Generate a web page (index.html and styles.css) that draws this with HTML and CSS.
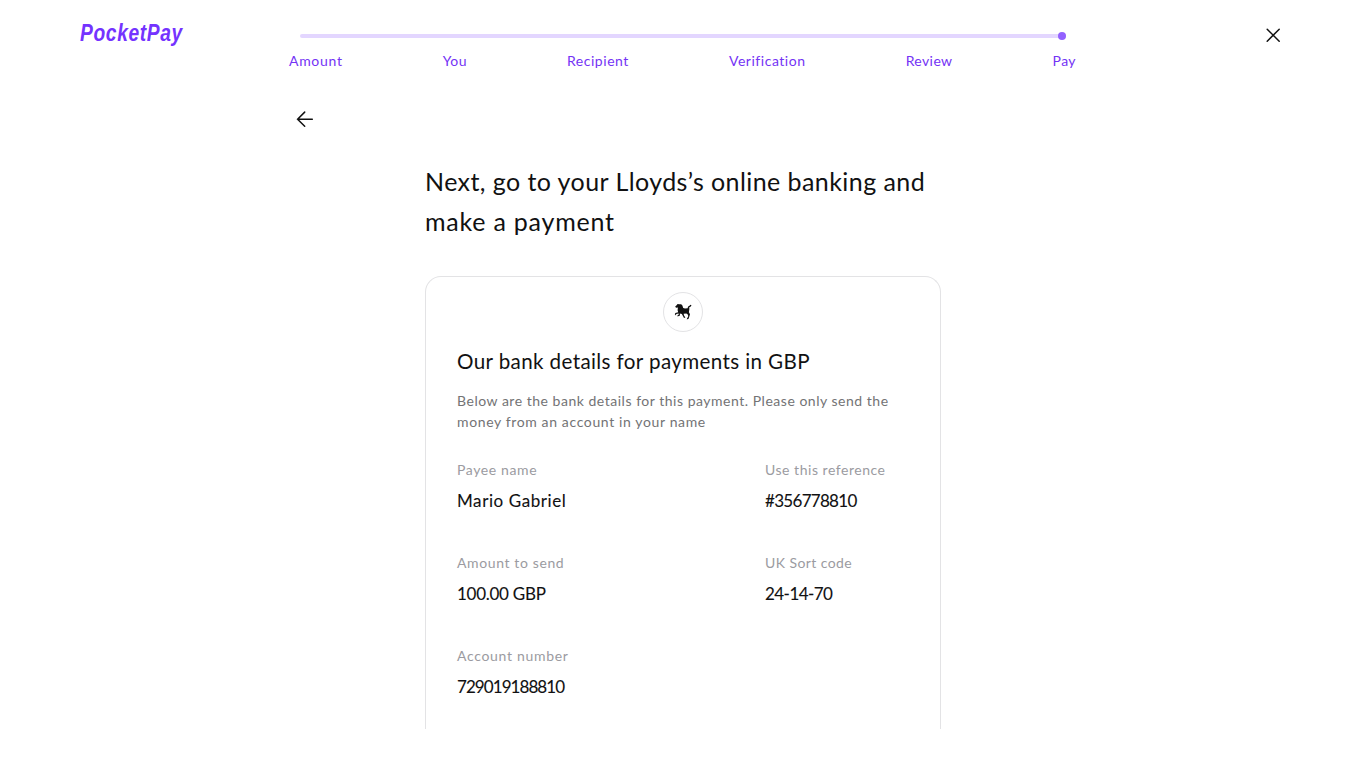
FILE: index.html
```
<!DOCTYPE html>
<html lang="en">
<head>
<meta charset="utf-8">
<title>PocketPay</title>
<link rel="stylesheet" href="styles.css">
</head>
<body>
<header class="header">
  <div class="logo"><span class="logo-text">PocketPay</span></div>
  <nav class="progress">
    <div class="track"><span class="dot"></span></div>
    <ol class="steps">
      <li class="wide">Amount</li><li class="snug">You</li><li>Recipient</li><li>Verification</li><li class="snug">Review</li><li class="snug">Pay</li>
    </ol>
  </nav>
  <button class="close" aria-label="Close"><svg width="16" height="16" viewBox="0 0 16 16"><path d="M2.2 2.2 14.2 14.2M14.2 2.2 2.2 14.2"/></svg></button>
</header>
<main class="main">
  <button class="back" aria-label="Back"><svg width="18" height="18" viewBox="0 0 18 18"><path d="M8.7 2.1 1.6 9.2 8.7 16.3M1.6 9.2H16.3"/></svg></button>
  <h1 class="heading">Next, go to your Lloyds’s online banking and<br><span class="heading-end">make a payment</span></h1>
  <section class="card">
    <div class="bank"><svg width="18" height="18" viewBox="0 0 18 18"><path d="M1.2 3.6 2.6 2.2 3.6 1 5.2 1.3 7.2 1.2 8.4 2.6 9.2 5 11 5.6 13.6 5.2 14.1 3.6 15.2 3 16.4 1.7 17.5 2.2 16.8 3.6 15.3 4.2 15.3 6.6 14.9 9.3 16 11.2 15.4 13.2 14.6 15.8 12.8 16.4 13 15.6 14.2 13.4 14 11.7 12.4 10.4 9.6 10.8 10.2 12.8 11.4 14.6 10 15 8.8 12.8 7.8 11 5.8 10.6 6 12.4 3.6 13.4 3.4 12.6 4.8 11.6 4.6 10.6 2.2 11 2 12.4.8 11.2 1.4 10 4.2 9.2 3.6 7.2 3.9 4.4 2 4.8Z"/></svg></div>
    <h2 class="title">Our bank details for payments in GBP</h2>
    <p class="intro">Below are the bank details for this payment. Please only send the<br><span class="intro-end">money from an account in your name</span></p>
    <dl class="details">
      <div><dt>Payee name</dt><dd class="name">Mario Gabriel</dd></div>
      <div><dt class="reference">Use this reference</dt><dd class="number">#356778810</dd></div>
      <div><dt>Amount to send</dt><dd class="amount">100.00 GBP</dd></div>
      <div><dt class="sort-label">UK Sort code</dt><dd class="sort">24-14-70</dd></div>
      <div><dt class="account-label">Account number</dt><dd class="account">729019188810</dd></div>
    </dl>
  </section>
</main>
</body>
</html>
```
FILE: styles.css
```
* { box-sizing: border-box; margin: 0; padding: 0; }
body { height: 768px; overflow: hidden; background: #fff; color: #111112; font-family: Lato, sans-serif; }
button { border: 0; background: none; }
svg { display: block; }
.header { display: flex; height: 88px; align-items: flex-start; padding: 0 85px 0 80px; }
.logo { width: 209px; padding-top: 19px; }
.logo-text { display: inline-block; font: italic bold 24px/28px "Liberation Sans", sans-serif; letter-spacing: .8px; color: #7433ff; transform: scaleX(.8); transform-origin: left; }
.progress { width: 787px; padding-top: 34px; }
.track { display: flex; align-items: center; justify-content: flex-end; height: 4px; margin: 0 10px 0 11px; border-radius: 2px; background: #e3d6ff; }
.dot { width: 8px; height: 8px; border-radius: 50%; background: #9361ff; }
.steps { display: flex; justify-content: space-between; margin-top: 12px; list-style: none; font-size: 14px; line-height: 21px; letter-spacing: .53px; color: #7433f5; }
.steps .wide { letter-spacing: .7px; }
.steps .snug { letter-spacing: .4px; }
.close { margin: 27px 0 0 auto; }
.close path, .back path { fill: none; stroke: #111; stroke-width: 1.5; stroke-linecap: round; }
.main { display: flex; flex-direction: column; }
.back { width: 18px; margin: 22px 0 33px 296px; }
.heading { margin-left: 425px; font-size: 25px; font-weight: 400; line-height: 40px; letter-spacing: .43px; white-space: nowrap; }
.heading-end { letter-spacing: .77px; }
.card { width: 516px; height: 453px; margin: 35px 0 0 425px; padding: 15px 31px 0; border: 1px solid #e3e3e5; border-bottom: 0; border-radius: 16px 16px 0 0; }
.bank { display: flex; align-items: center; justify-content: center; width: 40px; height: 40px; margin: 0 auto; border: 1px solid #e3e3e5; border-radius: 50%; fill: #111; }
.title { margin-top: 15px; font-size: 20.6px; font-weight: 400; line-height: 28px; letter-spacing: .38px; }
.intro { margin-top: 15px; font-size: 14px; line-height: 21px; letter-spacing: .52px; color: #737375; white-space: nowrap; }
.intro-end { letter-spacing: .63px; }
.details { display: grid; grid-template-columns: 308px 1fr; grid-auto-rows: 93px; margin-top: 27px; }
dt { font-size: 14px; line-height: 21px; letter-spacing: .62px; color: #9b9ba1; }
dd { margin-top: 9px; font-size: 17px; line-height: 24px; -webkit-text-stroke: .1px; }
.reference { letter-spacing: .53px; }
.sort-label { letter-spacing: .42px; }
.account-label { letter-spacing: .69px; }
.name { letter-spacing: .58px; }
.number { letter-spacing: -.7px; }
.amount { letter-spacing: -.27px; }
.sort { letter-spacing: -.55px; }
.account { letter-spacing: -.93px; }
```
